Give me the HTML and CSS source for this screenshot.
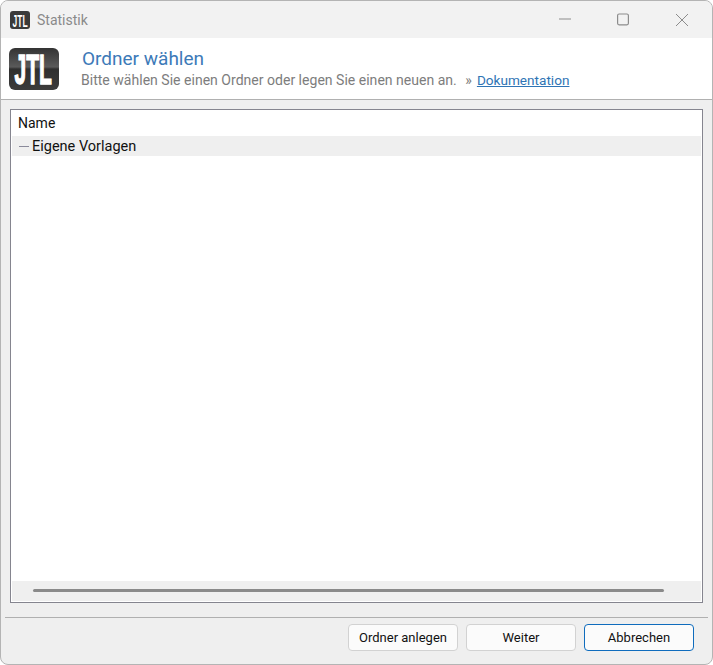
FILE: index.html
```html
<!DOCTYPE html>
<html lang="de">
<head>
  <meta charset="UTF-8">
  <title>Statistik</title>
  <link rel="stylesheet" href="styles.css">
</head>
<body>
  <div class="window">
    <div class="titlebar">
      <svg class="app-icon" width="20" height="18" viewBox="0 0 20 18">
        <rect width="20" height="18" rx="3" fill="#3a3a3a"/>
        <text class="logo-text small" transform="translate(2.5 15.5) scale(1 2)" font-size="8.5">JTL</text>
      </svg>
      <span class="title">Statistik</span>
      <div class="win-buttons">
        <svg width="14" height="14" viewBox="0 0 14 14"><path d="M0 6h12" stroke="#8c8c8c" fill="none"/></svg>
        <svg width="14" height="14" viewBox="0 0 14 14"><rect x=".6" y="1" width="10.8" height="10.8" rx="1.5" stroke="#8c8c8c" stroke-width="1.2" fill="none"/></svg>
        <svg width="14" height="14" viewBox="0 0 14 14"><path d="M1 1l12 12M13 1L1 13" stroke="#8c8c8c" fill="none"/></svg>
      </div>
    </div>

    <div class="header">
      <svg class="logo" width="50" height="50" viewBox="0 0 50 50">
        <defs>
          <linearGradient id="logoBg" x1="0" y1="0" x2="0" y2="1">
            <stop offset="0" stop-color="#333"/>
            <stop offset=".45" stop-color="#5a5a5a"/>
            <stop offset=".5" stop-color="#2f2f2f"/>
            <stop offset="1" stop-color="#3c3c3c"/>
          </linearGradient>
        </defs>
        <rect y="4" width="50" height="42" rx="6" fill="url(#logoBg)"/>
        <text class="logo-text big" transform="translate(5.5 40) scale(1 2)" font-size="21">JTL</text>
      </svg>
      <div class="header-text">
        <h1>Ordner wählen</h1>
        <p>Bitte wählen Sie einen Ordner oder legen Sie einen neuen an. <span class="sep">»</span><a href="#">Dokumentation</a></p>
      </div>
    </div>

    <div class="content">
      <div class="tree">
        <div class="tree-head">Name</div>
        <div class="tree-row"><span class="dash"></span>Eigene Vorlagen</div>
        <div class="tree-body"></div>
        <div class="scrollbar"><div class="thumb"></div></div>
      </div>
    </div>

    <div class="footer">
      <button>Ordner anlegen</button>
      <button>Weiter</button>
      <button class="primary">Abbrechen</button>
    </div>
  </div>
</body>
</html>
```

FILE: styles.css
```css
* {
  box-sizing: border-box;
}
html, body {
  height: 100%;
}
body {
  margin: 0;
  background-color: #fff;
  font-family: Roboto, "Liberation Sans", sans-serif;
  font-size: 14px;
  color: #111;
}
.window {
  display: flex;
  flex-direction: column;
  width: 713px;
  height: 665px;
  background-color: #efefef;
  border: 1px solid #b4b4b4;
  border-radius: 8px;
  overflow: hidden;
}
.titlebar {
  display: flex;
  align-items: center;
  height: 37px;
  padding: 0 23px 0 9px;
  background-color: #f2f2f2;
}
.app-icon {
  margin-right: 7px;
}
.title {
  flex: 1;
  font-size: 14px;
  color: #8a8a8a;
}
.win-buttons {
  display: flex;
  gap: 44px;
}
.logo-text {
  font-family: "Liberation Sans", sans-serif;
  font-weight: bold;
  fill: #fff;
}
.logo-text.big {
  stroke: #fff;
  stroke-width: .7px;
}
.header {
  display: flex;
  align-items: center;
  height: 62px;
  padding-left: 8px;
  background-color: #fff;
  border-bottom: 1px solid #b0b0b0;
}
.header-text {
  margin-left: 23px;
  padding-bottom: 2px;
}
h1 {
  margin: 0 0 2px;
  font-size: 19px;
  font-weight: normal;
  color: #3d7ab8;
}
.header-text p {
  margin: 0 0 0 -1px;
  font-size: 14.05px;
  color: #7d7d7d;
}
.sep {
  margin: 0 5px;
}
.header-text a {
  font-size: 13.6px;
  color: #2f74b5;
}
.content {
  flex: 1;
  padding: 9px 9px 14px;
}
.tree {
  display: flex;
  flex-direction: column;
  height: 100%;
  padding: 0 1px 1px;
  background-color: #fff;
  border: 1px solid #85858f;
}
.tree-head {
  height: 26px;
  padding: 5px 0 0 6px;
}
.tree-row {
  display: flex;
  align-items: center;
  height: 20px;
  padding: 1px 0 0 7px;
  font-size: 14.5px;
  background-color: #efefef;
}
.dash {
  width: 10px;
  height: 1px;
  margin-right: 3px;
  background-color: #8a8a9a;
}
.tree-body {
  flex: 1;
}
.scrollbar {
  height: 20px;
  padding: 8px 37px 0 21px;
  background-color: #efefef;
}
.thumb {
  height: 3px;
  border-radius: 2px;
  background-color: #8a8a8a;
}
.footer {
  display: flex;
  justify-content: flex-end;
  gap: 8px;
  height: 47px;
  margin: 0 4px;
  padding: 6px 14px 0 0;
  border-top: 1px solid #b0b0b0;
}
button {
  width: 110px;
  height: 27px;
  padding: 0;
  font-family: inherit;
  font-size: 13px;
  color: #111;
  background-color: #fbfbfb;
  border: 1px solid #d2d2d2;
  border-radius: 4px;
}
button.primary {
  border-color: #0f6cbd;
}
```
